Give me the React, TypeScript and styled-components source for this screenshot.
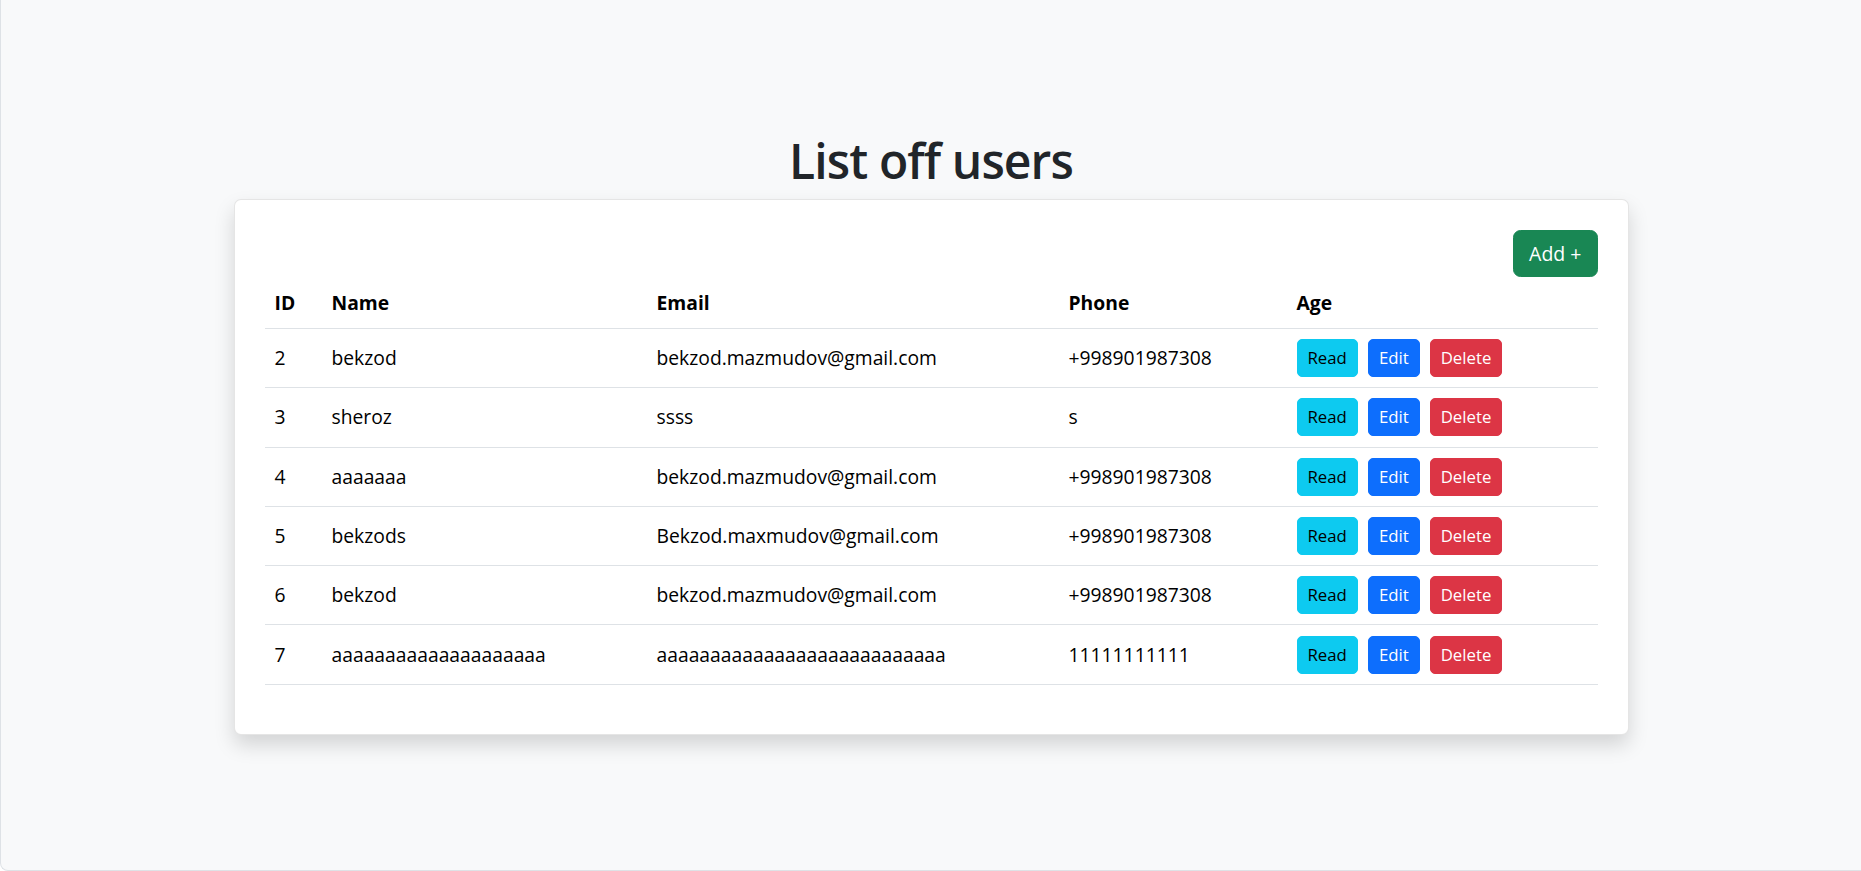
import React from 'react';
import styled, { createGlobalStyle } from 'styled-components';

interface User {
  id: number;
  name: string;
  email: string;
  phone: string;
}

const GlobalStyle = createGlobalStyle`
  html, body {
    margin: 0;
    padding: 0;
    overflow: hidden;
  }
  body {
    font-family: "Open Sans", "Noto Sans", "Liberation Sans", sans-serif;
    font-size: 19.3px;
    color: #212529;
    background: #ffffff;
  }
  * { box-sizing: border-box; }
`;

const Page = styled.div`
  height: 871px;
  background-color: #f8f9fa;
  border-left: 1px solid #dee2e6;
  border-bottom: 1px solid #dee2e6;
  border-bottom-left-radius: 8px;
  display: flex;
  flex-direction: column;
  align-items: center;
  padding-top: 131px;
`;

const Title = styled.h1`
  margin: 0 0 9px;
  font-size: 48px;
  font-weight: 600;
  letter-spacing: -0.9px;
  line-height: 59px;
  color: #212529;
`;

const Card = styled.div`
  width: 75%;
  background: #ffffff;
  border: 1px solid rgba(0, 0, 0, 0.1);
  border-radius: 7px;
  box-shadow: 0 10px 20px rgba(0, 0, 0, 0.15);
  padding: 30px 30px 29px;
`;

const Toolbar = styled.div`
  display: flex;
  justify-content: flex-end;
`;

const Button = styled.button<{ $bg: string; $fg: string; $size?: 'sm' | 'md' }>`
  font-family: inherit;
  background-color: ${p => p.$bg};
  border: 1px solid ${p => p.$bg};
  color: ${p => p.$fg};
  font-size: ${p => (p.$size === 'sm' ? '16.8px' : '19.5px')};
  line-height: ${p => (p.$size === 'sm' ? '26px' : '30px')};
  padding: ${p => (p.$size === 'sm' ? '5px 10px' : '7.5px 15px')};
  border-radius: ${p => (p.$size === 'sm' ? '5px' : '7.5px')};
  cursor: pointer;
  display: inline-block;
  margin-right: ${p => (p.$size === 'sm' ? '10px' : '0')};
`;

const Table = styled.table`
  width: 100%;
  border-collapse: collapse;
  margin-bottom: 20px;
  color: #000;
  vertical-align: top;
`;

const HeadCell = styled.th<{ $w: number }>`
  width: ${p => p.$w}px;
  text-align: left;
  font-weight: 700;
  padding: 11px 10px 10px;
  line-height: 30px;
  border-bottom: 1px solid #dee2e6;
`;

const Cell = styled.td`
  padding: 10px;
  line-height: 30px;
  border-bottom: 1px solid #dee2e6;
  white-space: nowrap;
`;

const Actions = styled.div`
  display: flex;
  align-items: center;
  height: 38.3px;
`;

const users: User[] = [
  { id: 2, name: 'bekzod', email: 'bekzod.mazmudov@gmail.com', phone: '+998901987308' },
  { id: 3, name: 'sheroz', email: 'ssss', phone: 's' },
  { id: 4, name: 'aaaaaaa', email: 'bekzod.mazmudov@gmail.com', phone: '+998901987308' },
  { id: 5, name: 'bekzods', email: 'Bekzod.maxmudov@gmail.com', phone: '+998901987308' },
  { id: 6, name: 'bekzod', email: 'bekzod.mazmudov@gmail.com', phone: '+998901987308' },
  { id: 7, name: 'aaaaaaaaaaaaaaaaaaaa', email: 'aaaaaaaaaaaaaaaaaaaaaaaaaaa', phone: '11111111111' },
];

const columns = [
  { label: 'ID', w: 57 },
  { label: 'Name', w: 325 },
  { label: 'Email', w: 412 },
  { label: 'Phone', w: 228 },
  { label: 'Age', w: 311 },
];

const App: React.FC = () => {
  return (
    <>
      <GlobalStyle />
      <Page>
        <Title>List off users</Title>
        <Card>
          <Toolbar>
            <Button $bg="#198754" $fg="#ffffff">Add +</Button>
          </Toolbar>
          <Table>
            <thead>
              <tr>
                {columns.map(col => (
                  <HeadCell key={col.label} $w={col.w}>{col.label}</HeadCell>
                ))}
              </tr>
            </thead>
            <tbody>
              {users.map(user => (
                <tr key={user.id}>
                  <Cell>{user.id}</Cell>
                  <Cell>{user.name}</Cell>
                  <Cell>{user.email}</Cell>
                  <Cell>{user.phone}</Cell>
                  <Cell>
                    <Actions>
                      <Button $bg="#0dcaf0" $fg="#000000" $size="sm">Read</Button>
                      <Button $bg="#0d6efd" $fg="#ffffff" $size="sm">Edit</Button>
                      <Button $bg="#dc3545" $fg="#ffffff" $size="sm">Delete</Button>
                    </Actions>
                  </Cell>
                </tr>
              ))}
            </tbody>
          </Table>
        </Card>
      </Page>
    </>
  );
};

export default App;
